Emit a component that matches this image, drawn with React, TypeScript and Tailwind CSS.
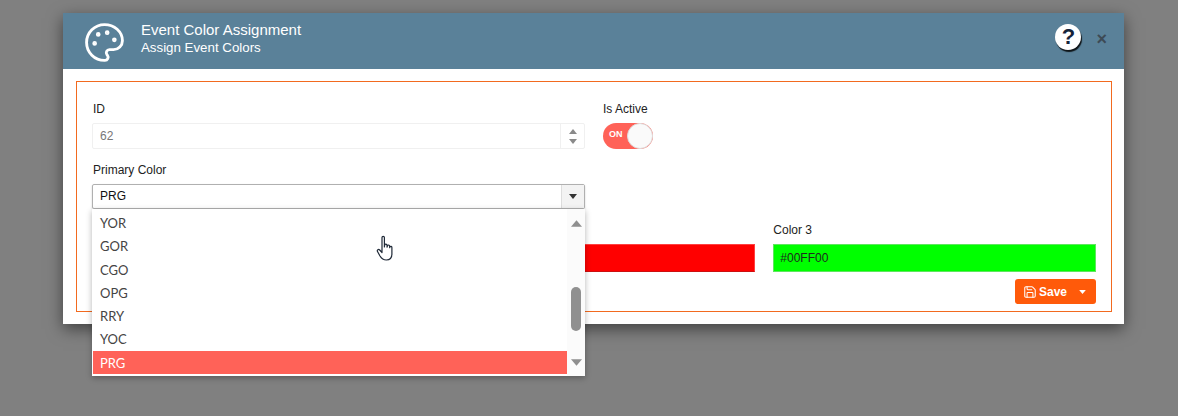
import { Palette, Save } from "lucide-react";

const options = ["YOR", "GOR", "CGO", "OPG", "RRY", "YOC"];

function Tri({ up, className }: { up?: boolean; className: string }) {
  return (
    <svg viewBox="0 0 10 6" className={className} fill="currentColor">
      <path d={up ? "M5 0 L10 6 L0 6 Z" : "M0 0 L10 0 L5 6 Z"} />
    </svg>
  );
}

function ColorField({ label, value, bg, col }: { label?: string; value?: string; bg: string; col: string }) {
  return (
    <div className={col}>
      <div className="h-[21px] text-[12px] leading-[14px] text-[#222]">{label}</div>
      <div className={`h-[28px] border pl-[6px] text-[12px] leading-[26px] text-[#1f2a1f] ${bg}`}>{value}</div>
    </div>
  );
}

export default function App() {
  return (
    <div className="h-[416px] w-[1178px] overflow-hidden bg-[#808080] pl-[63px] pt-[13px] font-['Liberation_Sans',sans-serif]">
      <div className="relative h-[311px] w-[1061px] bg-white shadow-[0_5px_15px_rgba(0,0,0,0.5)]">
        <div className="flex h-[56px] items-center bg-[#5a8199] pl-[20px] pr-[17px] text-white">
          <Palette className="mt-[3px] h-[43px] w-[43px]" strokeWidth={1.6} />
          <div className="ml-[15px] -mt-[6px]">
            <div className="text-[15px] leading-[20px]">Event Color Assignment</div>
            <div className="text-[13.3px] leading-[16px]">Assign Event Colors</div>
          </div>
          <div className="ml-auto -mt-[8px] flex h-[26px] w-[26px] items-center justify-center rounded-full bg-white text-[22px] font-bold leading-none text-[#16233a] shadow-[1px_2px_1px_rgba(0,0,0,0.85)]">?</div>
          <div className="ml-[15px] -mt-[4px] text-[18px] font-bold leading-none text-[#3d4a55]">×</div>
        </div>

        <div className="ml-[13px] mt-[12px] h-[231px] w-[1036px] border border-[#f26a1f] px-[15px] pt-[18px]">
          <div className="grid grid-cols-12 gap-x-[18px]">
            <div className="col-span-6">
              <div className="h-[23px] pl-[1px] text-[12px] leading-[18px] text-[#222]">ID</div>
              <div className="flex h-[26px] rounded-[2px] border border-[#f0f0f0] text-[12px] text-[#777]">
                <div className="flex-1 pl-[7px] leading-[24px]">62</div>
                <div className="flex w-[24px] flex-col items-center justify-center gap-[5px] border-l border-[#f0f0f0] text-[#8a8a8a]">
                  <Tri up className="h-[5px] w-[8px]" />
                  <Tri className="h-[5px] w-[8px]" />
                </div>
              </div>
            </div>
            <div className="col-span-6">
              <div className="h-[23px] text-[12px] leading-[18px] text-[#222]">Is Active</div>
              <div className="relative h-[26px] w-[50px] rounded-full bg-[#ff6258]">
                <span className="absolute left-[6px] top-[5px] text-[9px] font-bold leading-[13px] text-white">ON</span>
                <span className="absolute right-0 top-0 h-[26px] w-[26px] rounded-full border border-[#ddd] bg-[#fafafa]" />
              </div>
            </div>

            <div className="relative col-span-6 mt-[13px]">
              <div className="h-[22px] pl-[1px] text-[12px] leading-[16px] text-[#222]">Primary Color</div>
              <div className="flex h-[25px] rounded-[2px] border border-[#b0b0b0] text-[12px] text-[#111] shadow-[0_1px_2px_rgba(0,0,0,0.2)]">
                <div className="flex-1 pl-[7px] leading-[23px]">PRG</div>
                <div className="flex w-[23px] items-center justify-center border-l border-[#ddd] bg-[#f3f3f3] text-[#333]">
                  <Tri className="h-[5px] w-[8px]" />
                </div>
              </div>
              <div className="absolute left-0 top-[47px] z-10 flex h-[167px] w-full bg-white shadow-[0_2px_6px_rgba(0,0,0,0.3)]">
                <div className="flex-1 pl-[1px] pt-[2px] font-['Lato',sans-serif] text-[13px] text-[#444]">
                  {options.map((o) => (
                    <div key={o} className="h-[23.3px] pl-[7px] leading-[25.5px]">{o}</div>
                  ))}
                  <div className="h-[23px] bg-[#ff6258] pl-[7px] leading-[25px] text-white">PRG</div>
                </div>
                <div className="flex w-[18px] flex-col items-center bg-[#fbfbfb] pb-[10px] pt-[11px] text-[#8f8f8f]">
                  <Tri up className="h-[7px] w-[11px]" />
                  <div className="mt-[60px] h-[44px] w-[10px] rounded-full bg-[#909090]" />
                  <Tri className="mt-auto h-[7px] w-[11px]" />
                </div>
              </div>
            </div>
            <div className="col-span-6" />

            <div className="col-span-12 mt-[14px] grid grid-cols-12 gap-x-[18px]">
              <ColorField bg="border-[#e6e600] bg-[#ffff00]" col="col-span-4" />
              <ColorField bg="border-[#ff4040] border-b-[#cc1010] bg-[#ff0000]" col="col-span-4" />
              <ColorField label="Color 3" value="#00FF00" bg="border-[#5fe65f] bg-[#00ff00]" col="col-span-4" />
            </div>
          </div>
          <div className="mt-[7px] flex justify-end">
            <div className="flex h-[25px] w-[81px] items-center rounded-[3px] bg-[#ff5a0a] pl-[8px] text-[12px] font-bold text-white">
              <Save className="h-[14px] w-[14px]" strokeWidth={1.8} />
              <span className="ml-[2px]">Save</span>
              <Tri className="ml-auto mr-[10px] h-[4px] w-[7px]" />
            </div>
          </div>
        </div>
      </div>

      <svg className="absolute left-[376px] top-[235px] z-20 h-[28px] w-[20px]" viewBox="0 0 20 28" fill="#fff" stroke="#1f2937" strokeWidth="1.2" strokeLinejoin="round">
        <path d="M6 2.500c0-1.600 2.400-1.600 2.400 0V12l.3-2c.2-1.300 2.200-1.200 2.300.2l.1 2 .3-1.400c.3-1.200 2.100-1 2.200.3l.1 1.600.3-.8c.4-1 1.900-.7 1.900.5V19c0 3.500-2 6-5.600 6C7 25 5.500 23.500 4 21L1.500 16.500c-.8-1.500 1-2.700 2.200-1.500L6 17.500Z" />
      </svg>
    </div>
  );
}
